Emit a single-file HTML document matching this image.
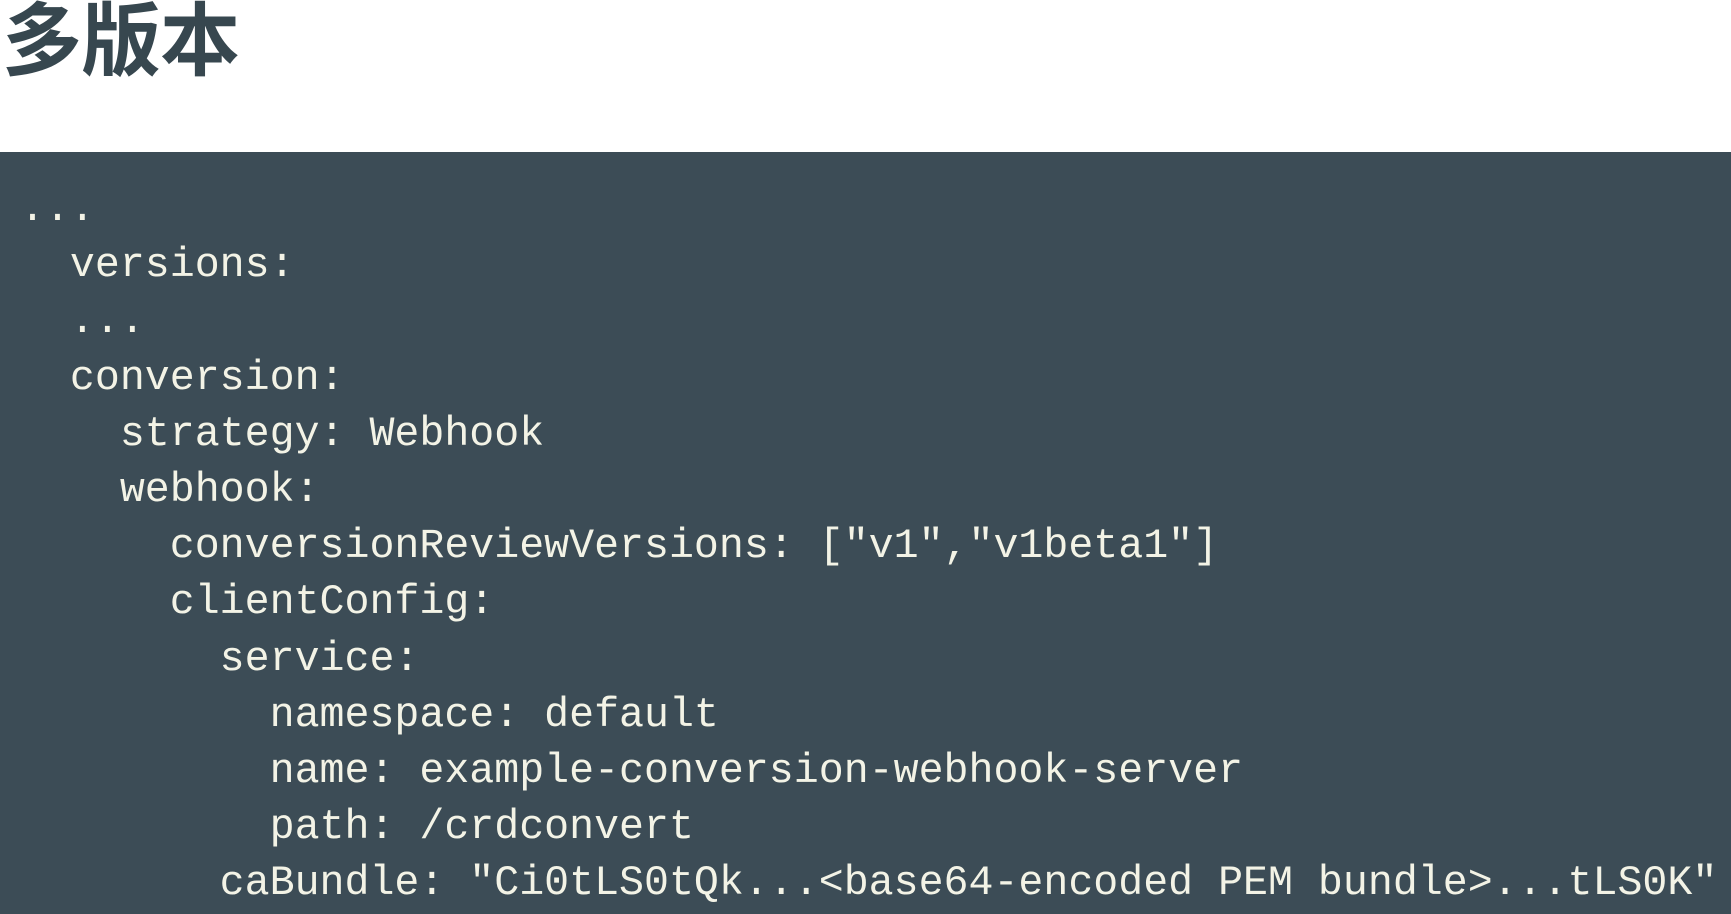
<!DOCTYPE html>
<html><head><meta charset="utf-8"><style>
html,body{margin:0;padding:0;width:1731px;height:914px;overflow:hidden;background:#fff}
.t{position:absolute;left:2px;top:-2px;font-family:"Liberation Sans","Noto Sans CJK SC",sans-serif;font-weight:bold;font-size:80px;line-height:88px;color:#37474f;letter-spacing:-1px}
.band{position:absolute;left:0;top:152px;width:1731px;height:762px;background:#3c4c56}
pre{position:absolute;left:20px;top:182px;margin:0;font-family:"Liberation Mono",monospace;font-size:41.6px;line-height:56.2px;color:#f3f3e6}
</style></head><body>
<div class="t">多版本</div>
<div class="band"></div>
<pre>...
  versions:
  ...
  conversion:
    strategy: Webhook
    webhook:
      conversionReviewVersions: ["v1","v1beta1"]
      clientConfig:
        service:
          namespace: default
          name: example-conversion-webhook-server
          path: /crdconvert
        caBundle: "Ci0tLS0tQk...&lt;base64-encoded PEM bundle&gt;...tLS0K"</pre>
</body></html>
